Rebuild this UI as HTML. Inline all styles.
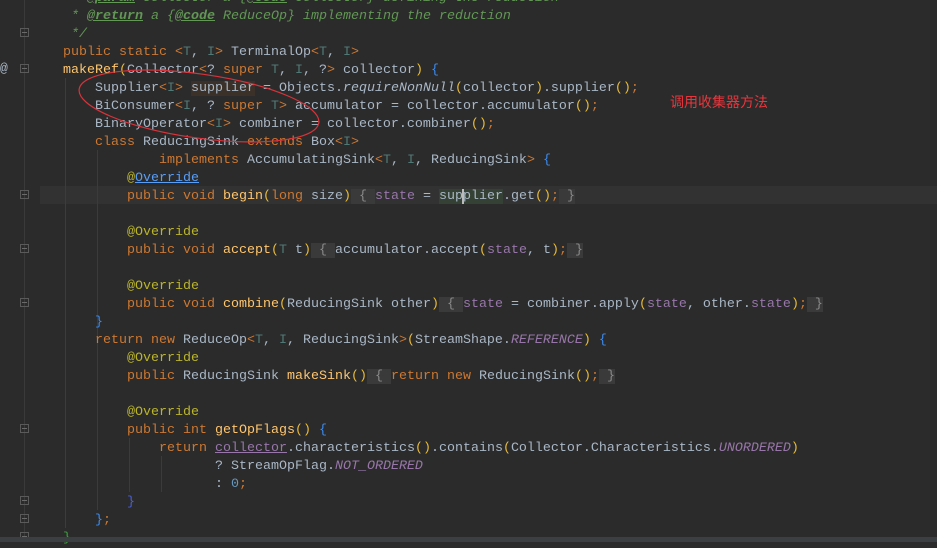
<!DOCTYPE html>
<html><head><meta charset="utf-8">
<style>
html,body{margin:0;padding:0;}
body{width:937px;height:542px;background:#2b2b2b;overflow:hidden;position:relative;font-family:"Liberation Mono",monospace;font-size:13.33px;color:#a9b7c6;}
.l{position:absolute;left:0;height:18px;line-height:18px;white-space:pre;width:937px;margin-top:2px;}
.code{position:absolute;left:63px;top:0;}
.k{color:#cc7832}.t{color:#507874}.y{color:#e8ba36}.o{color:#cc7832}.f{color:#9876aa}.fi{color:#9876aa;font-style:italic}
.m{color:#ffc66d}.a{color:#bbb529}.c{color:#629755;font-style:italic}.cb{color:#629755;font-style:italic;font-weight:bold;text-decoration:underline}
.b{color:#3d8beb}.n{color:#6897bb}.g{color:#808080}.it{font-style:italic}
.fb{background:#3a3a3a;color:#8a8a8a}
.ul{text-decoration:underline}
.gut{position:absolute;left:0;top:0;width:40px;height:537px;background:#2b2b2b}
.fold{position:absolute;left:20px;width:9px;height:9px;border:1px solid #5a5a5a;box-sizing:border-box}
.fold:after{content:"";position:absolute;left:1px;top:3px;width:5px;height:1px;background:#6a6a6a}
.guide{position:absolute;width:1px;background:#3b3b3b}
</style></head><body>
<div class="gut"></div>
<div style="position:absolute;left:24px;top:0;width:1px;height:537px;background:#3a3a3a"></div>
<div style="position:absolute;left:40px;top:186px;width:897px;height:18px;background:#323232"></div>
<div class="guide" style="left:65px;top:78px;height:450px;background:#344134"></div>
<div class="guide" style="left:97px;top:150px;height:360px"></div>
<div class="guide" style="left:129px;top:438px;height:54px"></div>
<div class="guide" style="left:161px;top:456px;height:36px"></div>
<div style="position:absolute;left:0;top:61px;color:#a9b7c6;font-size:13px">@</div>
<div class="fold" style="top:28px"></div>
<div class="fold" style="top:64px"></div>
<div class="fold" style="top:190px"></div>
<div class="fold" style="top:244px"></div>
<div class="fold" style="top:298px"></div>
<div class="fold" style="top:424px"></div>
<div class="fold" style="top:496px"></div>
<div class="fold" style="top:514px"></div>
<div class="fold" style="top:532px"></div>

<div class="l" style="top:-12px"><span class="code"><span class="c"> * </span><span class="cb">@param</span><span class="c"> collector a {</span><span class="cb">@code</span><span class="c"> Collector} defining the reduction</span></span></div>
<div class="l" style="top:6px"><span class="code"><span class="c"> * </span><span class="cb">@return</span><span class="c"> a {</span><span class="cb">@code</span><span class="c"> ReduceOp} implementing the reduction</span></span></div>
<div class="l" style="top:24px"><span class="code"><span class="c"> */</span></span></div>
<div class="l" style="top:42px"><span class="code"><span class="k">public static </span><span class="o">&lt;</span><span class="t">T</span>, <span class="t">I</span><span class="o">&gt;</span> TerminalOp<span class="o">&lt;</span><span class="t">T</span>, <span class="t">I</span><span class="o">&gt;</span></span></div>
<div class="l" style="top:60px"><span class="code"><span class="m">makeRef</span><span class="y">(</span>Collector<span class="o">&lt;</span>? <span class="k">super</span> <span class="t">T</span>, <span class="t">I</span>, ?<span class="o">&gt;</span> collector<span class="y">)</span> <span class="b">{</span></span></div>
<div class="l" style="top:78px"><span class="code">    Supplier<span class="o">&lt;</span><span class="t">I</span><span class="o">&gt;</span> <span style="background:#3b3128">supplier</span> = Objects.<span class="it">requireNonNull</span><span class="y">(</span>collector<span class="y">)</span>.supplier<span class="y">()</span><span class="k">;</span></span></div>
<div class="l" style="top:96px"><span class="code">    BiConsumer<span class="o">&lt;</span><span class="t">I</span>, ? <span class="k">super</span> <span class="t">T</span><span class="o">&gt;</span> accumulator = collector.accumulator<span class="y">()</span><span class="k">;</span></span></div>
<div class="l" style="top:114px"><span class="code">    BinaryOperator<span class="o">&lt;</span><span class="t">I</span><span class="o">&gt;</span> combiner = collector.combiner<span class="y">()</span><span class="k">;</span></span></div>
<div class="l" style="top:132px"><span class="code">    <span class="k">class</span> ReducingSink <span class="k">extends</span> Box<span class="o">&lt;</span><span class="t">I</span><span class="o">&gt;</span></span></div>
<div class="l" style="top:150px"><span class="code">            <span class="k">implements</span> AccumulatingSink<span class="o">&lt;</span><span class="t">T</span>, <span class="t">I</span>, ReducingSink<span class="o">&gt;</span> <span class="b">{</span></span></div>
<div class="l" style="top:168px"><span class="code">        <span class="a">@</span><span style="color:#589df6" class="ul">Override</span></span></div>
<div class="l" style="top:186px"><span class="code">        <span class="k">public void</span> <span class="m">begin</span><span class="y">(</span><span class="k">long</span> size<span class="y">)</span><span class="fb"> { </span><span class="f">state</span> = <span style="background:#344134">sup<span style="border-left:2px solid #bbb;margin-left:-1px;margin-right:-1px"></span>plier</span>.get<span class="y">()</span><span class="k">;</span><span class="fb"> }</span></span></div>
<div class="l" style="top:222px"><span class="code">        <span class="a">@Override</span></span></div>
<div class="l" style="top:240px"><span class="code">        <span class="k">public void</span> <span class="m">accept</span><span class="y">(</span><span class="t">T</span> t<span class="y">)</span><span class="fb"> { </span>accumulator.accept<span class="y">(</span><span class="f">state</span>, t<span class="y">)</span><span class="k">;</span><span class="fb"> }</span></span></div>
<div class="l" style="top:276px"><span class="code">        <span class="a">@Override</span></span></div>
<div class="l" style="top:294px"><span class="code">        <span class="k">public void</span> <span class="m">combine</span><span class="y">(</span>ReducingSink other<span class="y">)</span><span class="fb"> { </span><span class="f">state</span> = combiner.apply<span class="y">(</span><span class="f">state</span>, other.<span class="f">state</span><span class="y">)</span><span class="k">;</span><span class="fb"> }</span></span></div>
<div class="l" style="top:312px"><span class="code">    <span class="b">}</span></span></div>
<div class="l" style="top:330px"><span class="code">    <span class="k">return new</span> ReduceOp<span class="o">&lt;</span><span class="t">T</span>, <span class="t">I</span>, ReducingSink<span class="o">&gt;</span><span class="y">(</span>StreamShape.<span class="fi">REFERENCE</span><span class="y">)</span> <span class="b">{</span></span></div>
<div class="l" style="top:348px"><span class="code">        <span class="a">@Override</span></span></div>
<div class="l" style="top:366px"><span class="code">        <span class="k">public</span> ReducingSink <span class="m">makeSink</span><span class="y">()</span><span class="fb"> { </span><span class="k">return new</span> ReducingSink<span class="y">()</span><span class="k">;</span><span class="fb"> }</span></span></div>
<div class="l" style="top:402px"><span class="code">        <span class="a">@Override</span></span></div>
<div class="l" style="top:420px"><span class="code">        <span class="k">public int</span> <span class="m">getOpFlags</span><span class="y">()</span> <span class="b">{</span></span></div>
<div class="l" style="top:438px"><span class="code">            <span class="k">return</span> <span class="f ul">collector</span>.characteristics<span class="y">()</span>.contains<span class="y">(</span>Collector.Characteristics.<span class="fi">UNORDERED</span><span class="y">)</span></span></div>
<div class="l" style="top:456px"><span class="code">                   ? StreamOpFlag.<span class="fi">NOT_ORDERED</span></span></div>
<div class="l" style="top:474px"><span class="code">                   : <span class="n">0</span><span class="k">;</span></span></div>
<div class="l" style="top:492px"><span class="code">        <span style="color:#4a5fd6">}</span></span></div>
<div class="l" style="top:510px"><span class="code">    <span class="b">}</span><span class="k">;</span></span></div>
<div class="l" style="top:528px"><span class="code"><span style="color:#3fa040">}</span></span></div>
<div style="position:absolute;left:0;top:537px;width:937px;height:5px;background:#3c3f41"></div>

<svg width="937" height="542" style="position:absolute;left:0;top:0">
<ellipse cx="199" cy="106" rx="121" ry="32" transform="rotate(8 199 106)" fill="none" stroke="#d8323a" stroke-width="1.2"/>
</svg>
<div style="position:absolute;left:670px;top:93px;font-family:'Liberation Sans','Noto Sans CJK SC',sans-serif;font-size:14px;line-height:18px;color:#e8363c">调用收集器方法</div>
</body></html>
